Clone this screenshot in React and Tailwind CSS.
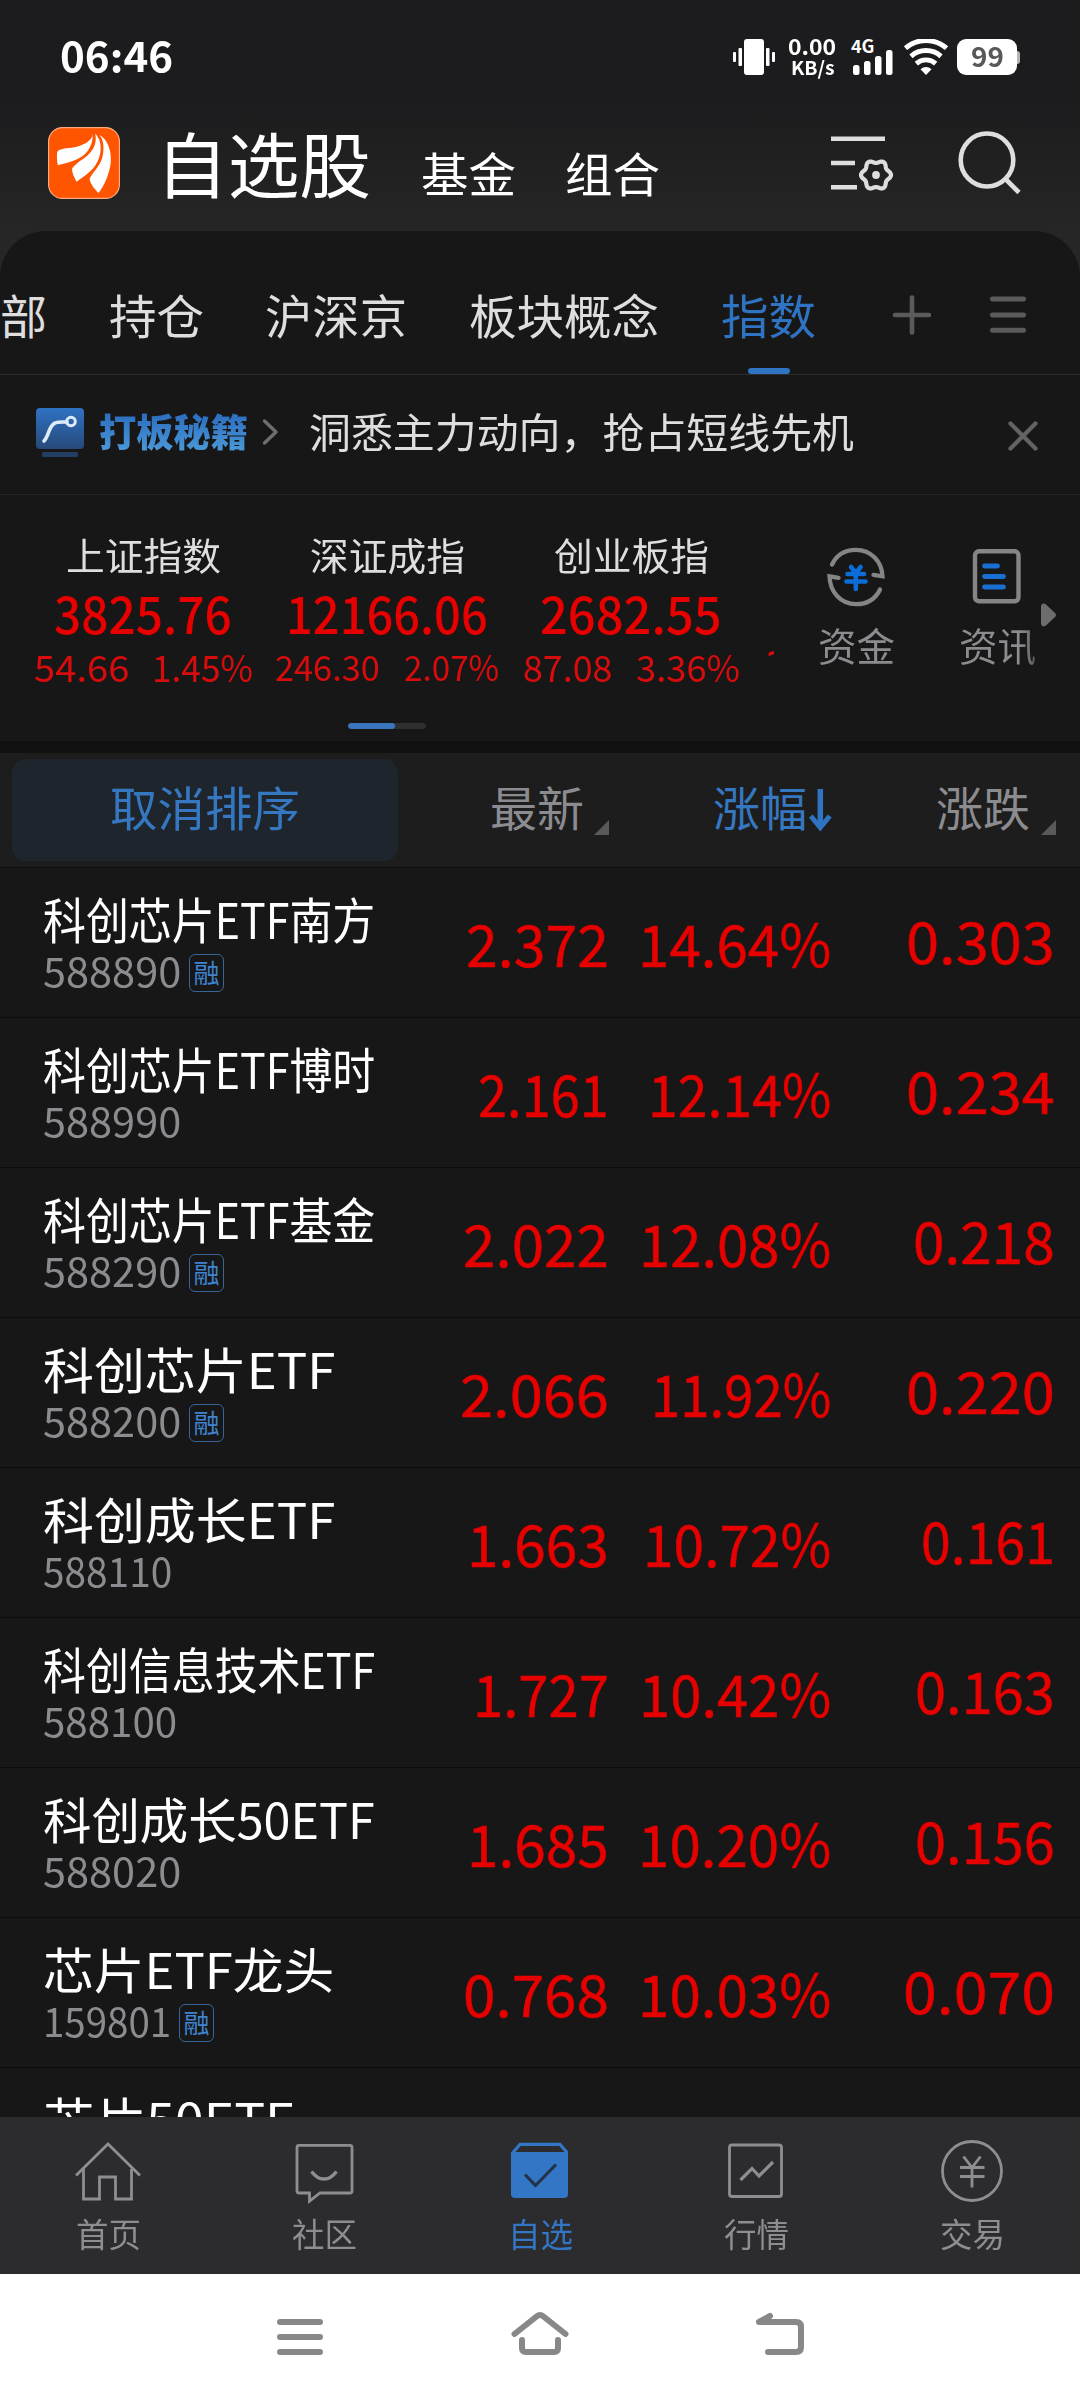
import { useLayoutEffect, useRef, useState } from "react";

/* Single-line text squeezed or stretched horizontally to a given width. */
function Fit({ w, className = "", inner = "", children }) {
  const ref = useRef(null);
  const [scale, setScale] = useState(1);
  useLayoutEffect(() => {
    const natural = ref.current.offsetWidth;
    if (natural) setScale(w / natural);
  }, [w, children]);
  return (
    <span className={"block shrink-0 " + className} style={{ width: w }}>
      <span ref={ref} className={"inline-block origin-left whitespace-nowrap align-top " + inner} style={{ transform: `scaleX(${scale})` }}>
        {children}
      </span>
    </span>
  );
}

const ROWS = [
  { name: "科创芯片ETF南方", nw: 332, code: "588890", cw: 138, margin: true, price: "2.372", pw: 143, pct: "14.64%", tw: 193, chg: "0.303", gw: 149 },
  { name: "科创芯片ETF博时", nw: 332, code: "588990", cw: 138, price: "2.161", pw: 131, pct: "12.14%", tw: 183, chg: "0.234", gw: 149 },
  { name: "科创芯片ETF基金", nw: 332, code: "588290", cw: 138, margin: true, price: "2.022", pw: 146, pct: "12.08%", tw: 192, chg: "0.218", gw: 142 },
  { name: "科创芯片ETF", nw: 292, code: "588200", cw: 138, margin: true, price: "2.066", pw: 149, pct: "11.92%", tw: 180, chg: "0.220", gw: 149 },
  { name: "科创成长ETF", nw: 292, code: "588110", cw: 129, price: "1.663", pw: 142, pct: "10.72%", tw: 188, chg: "0.161", gw: 134 },
  { name: "科创信息技术ETF", nw: 332, code: "588100", cw: 134, price: "1.727", pw: 136, pct: "10.42%", tw: 192, chg: "0.163", gw: 140 },
  { name: "科创成长50ETF", nw: 332, code: "588020", cw: 138, price: "1.685", pw: 142, pct: "10.20%", tw: 193, chg: "0.156", gw: 140 },
  { name: "芯片ETF龙头", nw: 291, code: "159801", cw: 128, margin: true, price: "0.768", pw: 146, pct: "10.03%", tw: 193, chg: "0.070", gw: 152 },
];

/* Six-lobed gear outline centred on (45, 41). */
const GEAR = Array.from({ length: 72 }, (_, i) => {
  const t = (i * Math.PI) / 36;
  const r = 13.5 + 1.5 * Math.cos(6 * t);
  return `${(45 + r * Math.cos(t)).toFixed(2)},${(41 + r * Math.sin(t)).toFixed(2)}`;
}).join(" ");

function StatusBar() {
  return (
    <div className="flex h-[96px] items-start text-white">
      <div className="ml-[60px] mt-[28px] text-[41px] font-bold leading-[52px]">
        <Fit w={113}>06:46</Fit>
      </div>
      <svg className="ml-[560px] mt-[39px] h-[36px] w-[42px]" viewBox="0 0 42 36" fill="#fff">
        <rect x="0" y="13" width="3" height="10" rx="1" />
        <rect x="5.5" y="9" width="3.5" height="18" rx="1" />
        <rect x="11" y="0" width="20" height="36" rx="3" />
        <rect x="33" y="9" width="3.5" height="18" rx="1" />
        <rect x="39" y="13" width="3" height="10" rx="1" />
      </svg>
      <div className="ml-[13px] mt-[35px] flex flex-col font-bold">
        <Fit w={48} className="text-[22px] leading-[21px]">0.00</Fit>
        <Fit w={44} className="ml-[3px] text-[19px] leading-[21px]">KB/s</Fit>
      </div>
      <div className="ml-[15px] mt-[36px] flex h-[40px] w-[44px] flex-col">
        <Fit w={24} className="text-[18px] font-bold leading-[18px]">4G</Fit>
        <svg className="-mt-[4px] ml-[2px] h-[25px] w-[40px]" viewBox="0 0 40 25" fill="#fff">
          <rect x="0" y="15" width="6.5" height="10" rx="2.5" />
          <rect x="11" y="11" width="6.5" height="14" rx="2.5" />
          <rect x="22" y="6" width="6.5" height="19" rx="2.5" />
          <rect x="33" y="0" width="6.5" height="25" rx="2.5" />
        </svg>
      </div>
      <svg className="ml-[9px] mt-[39px] h-[36px] w-[44px]" viewBox="0 0 44 36" fill="none" stroke="#fff" strokeWidth="4.9">
        <path d="M1.500 9.200a31 31 0 0 1 41 0" />
        <path d="M7 17.300a22.500 22.500 0 0 1 30 0" />
        <path d="M12.300 24.600a14.500 14.500 0 0 1 19.400 0" />
        <path d="M16.500 30.300q5.500-4.400 11 0L22 36z" fill="#fff" stroke="none" />
      </svg>
      <div className="ml-[9px] mt-[39px] flex items-center">
        <div className="flex h-[36px] w-[60px] items-center justify-center rounded-[9px] bg-white pb-[3px] text-[27px] font-bold leading-[36px] text-[#585858]">
          <Fit w={33}>99</Fit>
        </div>
        <div className="h-[13px] w-[3px] rounded-r-[3px] bg-[#b5b5b5]" />
      </div>
    </div>
  );
}

function Header() {
  return (
    <div className="flex h-[135px] items-start text-white">
      <svg className="ml-[48px] mt-[31px] h-[72px] w-[72px]" viewBox="0 0 72 72">
        <rect x=".6" y=".6" width="70.8" height="70.8" rx="14" fill="#ff5400" stroke="#ffab80" strokeWidth="1.2" />
        <path d="M44.7 7.5C44 13.5 36 19 23.500 20.700C17 21.600 11 21.500 9.200 25C8.600 29 9 34 9.800 38.300C20 35.500 30 33.500 37 27C42.500 22 45 14 44.700 7.500z" fill="#fff" />
        <path d="M47.200 6.500C49 15 46.500 22 39.500 28.500C34 33 26 37.500 24 42C24 46 26.500 51 28.500 54.700C34 51 40 47 45 41.500C51.500 34 54.500 23 51.500 13.500C50.500 10.500 49 8.500 47.200 6.500z" fill="#fff" />
        <path d="M51.800 8C56 14 56.500 23 54 31.500C51.500 40 43.500 46.500 41.500 52C42.500 57 46.500 62 50.500 66C56.500 59 62 45 62.800 35C63.500 24 60 13 51.800 8z" fill="#fff" />
      </svg>
      <Fit w={215} className="ml-[36px] mt-[25px] text-[71px] leading-[80px]">自选股</Fit>
      <Fit w={95} className="ml-[50px] mt-[46px] text-[47px] leading-[60px]">基金</Fit>
      <Fit w={95} className="ml-[49px] mt-[46px] text-[47px] leading-[60px]">组合</Fit>
      <svg className="ml-[171px] mt-[38px] h-[60px] w-[64px]" viewBox="0 0 64 60" fill="none" stroke="#dedede">
        <path d="M0 4.800H54M0 29H24M0 53.200H26" strokeWidth="4.600" />
        <polygon points={GEAR} strokeWidth="4.200" strokeLinejoin="round" />
        <circle cx="45" cy="41" r="3.900" fill="#dedede" stroke="none" />
      </svg>
      <svg className="ml-[63px] mt-[35px] h-[64px] w-[64px]" viewBox="0 0 64 64" fill="none" stroke="#dedede">
        <ellipse cx="29" cy="29" rx="26.300" ry="26.500" strokeWidth="4.600" />
        <path d="M47 47.500L61 61.500" strokeWidth="4.600" />
      </svg>
    </div>
  );
}

function Tabs() {
  return (
    <div className="flex h-[144px] items-start border-b border-[#2c2c2c] text-[47px] leading-[60px] text-[#dedede]">
      <div className="flex pt-[53px]">
        <Fit w={47}>部</Fit>
        <Fit w={95} className="ml-[62px]">持仓</Fit>
        <Fit w={142} className="ml-[61px]">沪深京</Fit>
        <Fit w={190} className="ml-[62px]">板块概念</Fit>
        <div className="ml-[62px] flex flex-col items-center text-[#2f73c3]">
          <Fit w={95}>指数</Fit>
          <div className="mt-[24px] h-[6px] w-[42px] rounded-full bg-[#2f73c3]" />
        </div>
      </div>
      <svg className="ml-[76px] mt-[64px] h-[40px] w-[40px]" viewBox="0 0 40 40" stroke="#5b5b5b" strokeWidth="4.600" strokeLinecap="round">
        <path d="M3 20H37M20 2.500V37.500" />
      </svg>
      <svg className="ml-[58px] mt-[64px] h-[40px] w-[36px]" viewBox="0 0 36 40" stroke="#5b5b5b" strokeWidth="5" strokeLinecap="round">
        <path d="M2.500 4H33.500M2.500 20H33.500M2.500 35.200H33.500" />
      </svg>
    </div>
  );
}

function Banner() {
  return (
    <div className="flex h-[120px] items-start border-b border-[#262626]">
      <svg className="ml-[36px] mt-[33px] h-[50px] w-[48px]" viewBox="0 0 48 50">
        <defs>
          <linearGradient id="badge" x1="0" y1="0" x2="0" y2="1">
            <stop offset="0" stopColor="#2f72c2" />
            <stop offset="1" stopColor="#27497a" />
          </linearGradient>
        </defs>
        <rect width="48" height="41" rx="4" fill="url(#badge)" />
        <rect x="6" y="44" width="36" height="5" rx="1.500" fill="#223f63" />
        <path d="M8 33C13 28 12.500 18 19 15C22 13.500 27 14 31 14" fill="none" stroke="#dcebfa" strokeWidth="3.600" strokeLinecap="round" />
        <circle cx="35" cy="13.500" r="4.300" fill="none" stroke="#dcebfa" strokeWidth="3" />
      </svg>
      <Fit w={149} className="ml-[15px] mt-[30px] text-[38px] font-black leading-[50px]" inner="bg-gradient-to-b from-[#2d6fc0] from-20% to-[#4a97d8] to-90% bg-clip-text text-transparent">
        打板秘籍
      </Fit>
      <svg className="ml-[13px] mt-[43px] h-[28px] w-[19px]" viewBox="0 0 19 28" fill="none" stroke="#6e6e6e" strokeWidth="3.400" strokeLinecap="round" strokeLinejoin="round">
        <path d="M3.500 3L15 14L3.500 25" />
      </svg>
      <Fit w={545} className="ml-[29px] mt-[30px] text-[41px] leading-[50px] text-[#dedede]">洞悉主力动向，抢占短线先机</Fit>
      <svg className="ml-[154px] mt-[46px] h-[30px] w-[30px]" viewBox="0 0 30 30" stroke="#636363" strokeWidth="4.200" strokeLinecap="round">
        <path d="M2.500 2.500L27.500 27.500M27.500 2.500L2.500 27.500" />
      </svg>
    </div>
  );
}

function IndexCard({ className, name, value, vw, a, aw, b, bw, gap, small }) {
  return (
    <div className={"flex flex-col items-center " + className}>
      <Fit w={155} className="text-[38px] leading-[44px] text-[#dedede]">{name}</Fit>
      <Fit w={vw} className="mt-[8px] text-[51px] font-medium leading-[56px] text-[#e60000]">{value}</Fit>
      <div className={"mt-[4px] flex leading-[44px] text-[#d80c0c] " + gap + " " + small}>
        <Fit w={aw}>{a}</Fit>
        <Fit w={bw}>{b}</Fit>
      </div>
    </div>
  );
}

function Indexes() {
  return (
    <div className="h-[246px]">
      <div className="flex h-[228px] items-start">
        <div className="flex h-[228px] w-[774px] items-start overflow-hidden pt-[37px]">
          <IndexCard className="ml-[33px] w-[220px] shrink-0" name="上证指数" value="3825.76" vw={178} a="54.66" aw={95} b="1.45%" bw={101} gap="gap-[23px]" small="text-[37px]" />
          <IndexCard className="ml-[22px] w-[224px] shrink-0" name="深证成指" value="12166.06" vw={202} a="246.30" aw={105} b="2.07%" bw={95} gap="gap-[24px]" small="text-[35px]" />
          <IndexCard className="ml-[22px] w-[220px] shrink-0" name="创业板指" value="2682.55" vw={182} a="87.08" aw={89} b="3.36%" bw={104} gap="gap-[24px]" small="text-[37px]" />
          <div className="ml-[24px] mt-[110px] shrink-0 font-['Roboto',sans-serif] text-[39px] leading-[44px] text-[#d80c0c]">1</div>
        </div>
        <div className="ml-[43px] flex w-[78px] flex-col items-center pt-[52px]">
          <svg className="h-[60px] w-[60px]" viewBox="0 0 60 60" fill="none" stroke="#858585" strokeWidth="4.300" strokeLinecap="round">
            <path d="M6 17.500C10.500 8 19 2.800 30 2.800C45 2.800 56 14.500 56.500 29.300L47.500 27.800" />
            <path d="M54 42.500C49.500 52 41 57.200 30 57.200C15 57.200 4 45.500 3.500 29.300L12.500 30.800" />
            <path d="M25 20L29.800 26L34.600 20M21.500 27H38M20.500 34.500H39.500M29.800 26V42" stroke="#0d6dd8" strokeWidth="4.600" />
          </svg>
          <Fit w={77} className="mt-[13px] text-[39px] leading-[48px] text-[#8c8c90]">资金</Fit>
        </div>
        <div className="ml-[63px] flex w-[78px] flex-col items-center pt-[54px]">
          <svg className="h-[56px] w-[50px]" viewBox="0 0 50 56" fill="none" strokeLinecap="round">
            <rect x="3" y="2.300" width="43.500" height="50" rx="4" stroke="#858585" strokeWidth="4.400" />
            <path d="M12.500 17H25.500M12.500 27.500H31.500M12.500 38H31.500" stroke="#1a70d2" strokeWidth="4.800" />
          </svg>
          <Fit w={77} className="mt-[15px] text-[39px] leading-[48px]" inner="bg-gradient-to-r from-[#8c8c90] from-80% to-[#5c5c60] bg-clip-text text-transparent">
            资讯
          </Fit>
        </div>
        <svg className="ml-[5px] mt-[108px] h-[24px] w-[15px]" viewBox="0 0 15 24" fill="#6d6d6d">
          <path d="M0 3Q1-1 5 1.500L14 10Q16 12 14 14L5 22.500Q1 25 0 21z" />
        </svg>
      </div>
      <div className="ml-[348px] h-[6px] w-[78px] overflow-hidden rounded-full bg-[#303030]">
        <div className="h-[6px] w-[47px] rounded-full bg-[#3a76bd]" />
      </div>
    </div>
  );
}

function Corner({ className }) {
  return (
    <svg className={"h-[15px] w-[15px] " + className} viewBox="0 0 15 15" fill="#59595b">
      <path d="M15 0V15H0z" />
    </svg>
  );
}

function TableHead() {
  return (
    <div className="flex h-[115px] items-start border-b border-[#0c0c0c] bg-[#1d1d1d] text-[47px] leading-[60px] text-[#8c8c90]">
      <div className="ml-[12px] mt-[6px] flex h-[102px] w-[386px] justify-center rounded-[14px] bg-[#1e252c] pt-[17px] text-[#3577c0]">
        <Fit w={190}>取消排序</Fit>
      </div>
      <Fit w={94} className="ml-[92px] mt-[23px]">最新</Fit>
      <Corner className="ml-[10px] mt-[67px]" />
      <Fit w={94} className="ml-[104px] mt-[23px] text-[#3577c0]">涨幅</Fit>
      <svg className="ml-[2px] mt-[36px] h-[43px] w-[23px]" viewBox="0 0 23 43" fill="none" stroke="#2f73c3">
        <path d="M11.300 0V39" strokeWidth="5.500" />
        <path d="M1.800 27L11.300 38.500L20.800 27" strokeWidth="5" />
      </svg>
      <Fit w={94} className="ml-[104px] mt-[23px]">涨跌</Fit>
      <Corner className="ml-[11px] mt-[67px]" />
    </div>
  );
}

function Row({ r }) {
  return (
    <div className="grid h-[150px] grid-cols-[398px_211px_222px_224px] border-b border-[#0c0c0c] text-[58px] leading-[70px] text-[#e60000]">
      <div className="pl-[43px] pt-[20px]">
        <Fit w={r.nw} className="text-[49px] leading-[60px] text-white">{r.name}</Fit>
        <div className="mt-[2px] flex text-[40px] leading-[40px] text-[#8c8c90]">
          <Fit w={r.cw}>{r.code}</Fit>
          {r.margin && (
            <div className="ml-[8px] mt-[4px] flex h-[38px] w-[35px] justify-center rounded-[6px] border border-[#386599] text-[26px] leading-[34px] text-[#3f84d0]">
              <Fit w={26}>融</Fit>
            </div>
          )}
        </div>
      </div>
      <div className="flex justify-end pt-[39px] [-webkit-text-stroke:0.5px_#e60000]"><Fit w={r.pw}>{r.price}</Fit></div>
      <div className="flex justify-end pt-[39px] [-webkit-text-stroke:0.5px_#e60000]"><Fit w={r.tw}>{r.pct}</Fit></div>
      <div className="flex justify-end pt-[36px] [-webkit-text-stroke:0.5px_#e60000]"><Fit w={r.gw}>{r.chg}</Fit></div>
    </div>
  );
}

function NavItem({ label, active, children }) {
  return (
    <div className={"flex w-[216px] flex-col items-center pt-[21px] " + (active ? "text-[#3276c5]" : "text-[#8e8e92]")}>
      <svg className="-ml-[1px] h-[66px] w-[68px]" viewBox="0 0 68 66" fill="none" stroke="currentColor" strokeWidth="2.800">
        {children}
      </svg>
      <Fit w={65} className="mt-[9px] text-[33px] leading-[40px]">{label}</Fit>
    </div>
  );
}

function BottomNav() {
  return (
    <div className="flex h-[157px] bg-[#2c2c2e]">
      <NavItem label="首页">
        <path d="M2 37.500L34 6L66 37.500" />
        <path d="M9.500 31V61H25.500V39H41.500V61H57.500V31" />
      </NavItem>
      <NavItem label="社区">
        <path d="M9 7.400H60Q62 7.400 62 9.400V53Q62 55 60 55H30L19.500 63.200V55H9Q7 55 7 53V9.400Q7 7.400 9 7.400z" />
        <path d="M21.500 33.500Q27 41 34 41Q41 41 46.500 33.500" strokeWidth="3.400" />
      </NavItem>
      <NavItem label="自选" active>
        <path d="M6.500 15L14 6.400H54L61.500 15" strokeWidth="3.200" />
        <path d="M5 14H62V56Q62 60 58 60H9Q5 60 5 56z" fill="currentColor" stroke="none" />
        <path d="M19 36.500L29.500 47.500L50 26.500" stroke="#23334a" strokeWidth="3.200" />
      </NavItem>
      <NavItem label="行情">
        <rect x="7.500" y="7" width="52" height="51.500" rx="2.500" />
        <path d="M18.500 42L30 30.500L37 38L51 24" strokeWidth="3.200" />
      </NavItem>
      <NavItem label="交易">
        <circle cx="34" cy="33" r="29.500" />
        <path d="M25.500 18.500L34 29.500L42.500 18.500M22 29.500H46.500M22 38.500H46.500M34 29.500V49.500" />
      </NavItem>
    </div>
  );
}

function SystemNav() {
  return (
    <div className="flex h-[126px] items-start bg-white pt-[36px]">
      <svg className="ml-[277px] h-[48px] w-[46px]" viewBox="0 0 46 48" fill="none" stroke="#888" strokeWidth="6" strokeLinecap="round">
        <path d="M3 12H43M3 27H43M3 42H43" />
      </svg>
      <svg className="ml-[188px] h-[48px] w-[58px]" viewBox="0 0 58 48" fill="none" stroke="#888" strokeWidth="6" strokeLinecap="round">
        <path d="M3.500 24L25.500 6.500Q29 3.500 32.500 6.500L54.500 24" />
        <path d="M11 30V38Q11 42 15 42H43Q47 42 47 38V30" />
      </svg>
      <svg className="ml-[187px] h-[48px] w-[49px]" viewBox="0 0 49 48" fill="none" stroke="#888" strokeWidth="6" strokeLinecap="round" strokeLinejoin="round">
        <path d="M14 6L3 12H40Q45 12 45 17V37Q45 42 40 42H12" />
      </svg>
    </div>
  );
}

export default function App() {
  return (
    <div className="flex h-[2400px] w-[1080px] flex-col overflow-hidden bg-[#171717] font-['Noto_Sans_CJK_SC',sans-serif]">
      <div className="h-[277px] shrink-0 bg-gradient-to-b from-[#1c1c1e] from-35% to-[#262626] to-85%">
        <StatusBar />
        <Header />
      </div>
      <div className="-mt-[46px] shrink-0 rounded-t-[46px] bg-[#171717]">
        <Tabs />
        <Banner />
        <Indexes />
      </div>
      <div className="h-[12px] shrink-0 bg-[#111111]" />
      <TableHead />
      <div className="h-[1249px] shrink-0 overflow-hidden">
        {ROWS.map((r) => (
          <Row key={r.code} r={r} />
        ))}
        <div className="pl-[43px] pt-[20px]">
          <Fit w={251} className="text-[49px] leading-[60px] text-white">芯片50ETF</Fit>
        </div>
      </div>
      <BottomNav />
      <SystemNav />
    </div>
  );
}
